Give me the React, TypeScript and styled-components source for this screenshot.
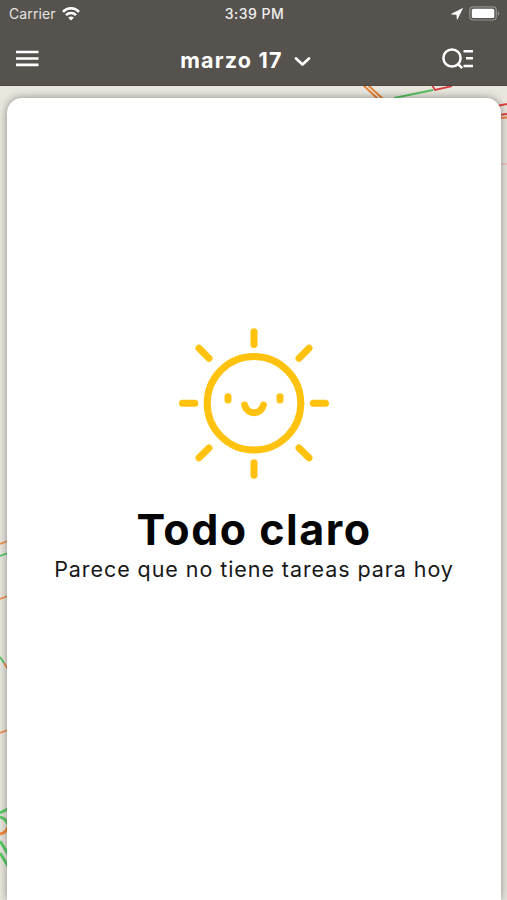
import React from "react";
import styled, { createGlobalStyle } from "styled-components";

const GlobalStyle = createGlobalStyle`
  *, *::before, *::after { box-sizing: border-box; }
  html, body { margin: 0; height: 100%; overflow: hidden; }
  body { font-family: Inter, Roboto, sans-serif; }
`;

const Screen = styled.main`
  position: relative;
  display: flex;
  flex-direction: column;
  width: 507px;
  height: 900px;
  overflow: hidden;
  background: #e8e6dd;
`;

const Header = styled.header`
  position: relative;
  flex: 0 0 86px;
  background: #56534e;
  border-bottom: 1px solid #4d4942;
  color: #fff;
`;

const StatusBar = styled.div`
  display: grid;
  grid-template-columns: 1fr auto 1fr;
  align-items: center;
  height: 27px;
  padding: 0 7px 0 9px;
`;

const StatusGroup = styled.div<{ $end?: boolean }>`
  display: flex;
  align-items: center;
  justify-content: ${(p) => (p.$end ? "flex-end" : "flex-start")};
  gap: 6px;
`;

const Carrier = styled.span`
  font: 400 14px/20px Inter, sans-serif;
  letter-spacing: 0.1px;
  color: #e4e3e1;
`;

const Clock = styled.time`
  font: 500 14px/20px Inter, sans-serif;
  letter-spacing: 0.45px;
  color: #f0efee;
`;

const NavBar = styled.nav`
  display: grid;
  grid-template-columns: 1fr auto 1fr;
  align-items: center;
  height: 58px;
  padding: 5px 32px 0 16px;
`;

const IconButton = styled.button<{ $end?: boolean }>`
  display: flex;
  justify-self: ${(p) => (p.$end ? "end" : "start")};
  padding: 0;
  border: 0;
  background: none;
  color: inherit;
`;

const DateButton = styled.button`
  display: flex;
  align-items: center;
  gap: 11px;
  padding: 3px 0 0;
  border: 0;
  background: none;
  color: #fff;
  font: 700 21.5px/28px Inter, sans-serif;
  letter-spacing: 1.2px;
  white-space: nowrap;

  svg { margin-top: 2px; }
`;

const MapArea = styled.section`
  position: relative;
  flex: 1;
  display: flex;
  padding: 12px 6px 0 7px;
`;

const Roads = styled.svg`
  position: absolute;
  inset: 0;
  fill: none;
  stroke-width: 1.8;
`;

const Card = styled.div`
  position: relative;
  flex: 1;
  display: flex;
  flex-direction: column;
  align-items: center;
  padding-top: 230px;
  border-radius: 15px 15px 0 0;
  background: #fff;
  box-shadow: 0 0 9px rgba(0, 0, 0, 0.4);
  color: #050505;
`;

const Title = styled.h1`
  margin: 25px 0 0;
  font: 700 43px/50px Inter, sans-serif;
  letter-spacing: 1.5px;
  white-space: nowrap;
`;

const Subtitle = styled.p`
  margin: 1px 0 0;
  font: 400 21.5px/28px Inter, sans-serif;
  letter-spacing: 0.93px;
  color: #181818;
  white-space: nowrap;
`;

const WifiIcon = () => (
  <svg width="18" height="14" viewBox="0 0 18 14" fill="none" stroke="#fff" strokeWidth="2.5">
    <path d="M1 4.8C5.4.2 12.6.2 17 4.8M4 8.1c2.8-2.8 7.2-2.8 10 0" />
    <path d="M6.2 10.7Q9 8.2 11.8 10.7L9 13.5Z" fill="#fff" stroke="none" />
  </svg>
);

const LocationIcon = () => (
  <svg width="12" height="12" viewBox="0 0 12 12" fill="#fff" stroke="#fff" strokeWidth=".7" strokeLinejoin="round">
    <path d="M11.5.5 6.2 11.3 5.8 6.4.6 6.1Z" />
  </svg>
);

const BatteryIcon = () => (
  <svg width="31" height="15" viewBox="0 0 31 15">
    <rect x=".8" y=".8" width="26.5" height="13.2" rx="3.5" fill="none" stroke="#92918e" strokeWidth="1.2" />
    <rect x="2.8" y="2.8" width="22.5" height="9.2" rx="1.5" fill="#fff" />
    <path d="M28.8 5q3 2.4 0 4.8Z" fill="#92918e" />
  </svg>
);

const MenuIcon = () => (
  <svg width="23" height="17" viewBox="0 0 23 17" stroke="#fff" strokeWidth="2.7">
    <path d="M0 2h22.5M0 8.5h22.5M0 14.9h22.5" />
  </svg>
);

const ChevronIcon = () => (
  <svg width="17" height="12" viewBox="0 0 17 12" fill="none" stroke="#fff" strokeWidth="2.7" strokeLinecap="round" strokeLinejoin="round">
    <path d="m2 3.5 6.5 6 6.5-6" />
  </svg>
);

const SearchListIcon = () => (
  <svg width="33" height="23" viewBox="0 0 33 23" fill="none" stroke="#fff" strokeWidth="2.5">
    <circle cx="10" cy="11" r="8.6" />
    <path d="m15.5 16.5 4.7 4.7M21.5 4.2H31M24 11.3h7M21.5 18.9H31" />
  </svg>
);

const SunIcon = () => (
  <svg width="150" height="151" viewBox="0 0 150 151" fill="none" stroke="#ffc20e" strokeWidth="7" strokeLinecap="round">
    <circle cx="75" cy="75.3" r="46.8" />
    <path d="M75 3.8v12.8M75 134.8v12.5M3.5 75.3h12.3M134.3 75.3h12.2M20 20.3 30 30.2M120 30.2l10-9.9M20 129.8l10-9.8M120 120l10 9.8" />
    <path d="M49 68.8v3.2M101 68.8v3.2M65.7 77c2.2 10.3 16.4 10.3 18.7 0" />
  </svg>
);

export default function App() {
  return (
    <>
      <GlobalStyle />
      <Screen>
        <Header>
          <StatusBar>
            <StatusGroup>
              <Carrier>Carrier</Carrier>
              <WifiIcon />
            </StatusGroup>
            <Clock>3:39 PM</Clock>
            <StatusGroup $end>
              <LocationIcon />
              <BatteryIcon />
            </StatusGroup>
          </StatusBar>
          <NavBar>
            <IconButton aria-label="Menú"><MenuIcon /></IconButton>
            <DateButton>marzo 17<ChevronIcon /></DateButton>
            <IconButton $end aria-label="Buscar"><SearchListIcon /></IconButton>
          </NavBar>
        </Header>
        <MapArea>
          <Roads width="507" height="814" viewBox="0 86 507 814">
            <path stroke="#e77b28" d="m363 85 15 14M368 85l15 14" />
            <path stroke="#56bf62" d="m394 98 39-8" />
            <path stroke="#d93d46" d="m432 85 3 5 17-4" />
            <path stroke="#e44143" d="m497 106 10-2M499 115l8-1" />
            <path stroke="#f27d3d" d="m499 118 8-.5" />
            <path stroke="#f0aaa6" strokeWidth="1" d="M499 164h8" />
            <path stroke="#f0914e" d="m0 544 8-3M0 599l8-3M0 733l8-3" />
            <path stroke="#51c467" d="m0 556 8-3M0 657l4 6" />
            <path stroke="#e98048" d="m4 663 4 6" />
            <path stroke="#5bcc67" strokeWidth="3" d="m0 813 8-4M0 817q5 1 8 7M0 841l8 13M0 853l8 13" />
            <path stroke="#f28b3b" strokeWidth="3" d="M0 834q6-1 8-7" />
          </Roads>
          <Card>
            <SunIcon />
            <Title>Todo claro</Title>
            <Subtitle>Parece que no tiene tareas para hoy</Subtitle>
          </Card>
        </MapArea>
      </Screen>
    </>
  );
}
